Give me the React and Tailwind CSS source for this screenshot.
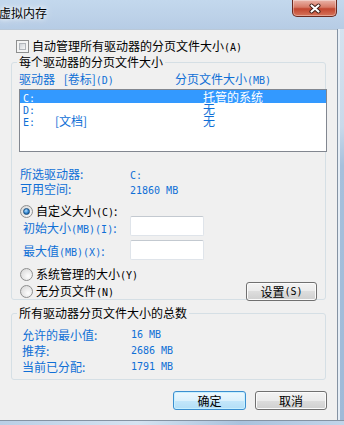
import React from "react";

const blue = "text-[#0f6fd6]";

// half-width latin parts look like a fixed 6px bitmap font in the reference
const Mono = ({ children }) => (
  <span className="font-['DejaVu_Sans_Mono',monospace] text-[10px]">{children}</span>
);

const CheckBox = () => (
  <span className="w-[13px] h-[13px] shrink-0 border border-[#8e8f8f] bg-[#f4f4f4] p-[2px] flex">
    <span className="flex-1 border border-[#b1b5ba] bg-[linear-gradient(135deg,#cfd3d8,#f7f7f7)]" />
  </span>
);

const Radio = ({ checked }) => (
  <span className="w-[13px] h-[13px] shrink-0 rounded-full border border-[#8e8f8f] bg-[radial-gradient(circle_at_65%_65%,#fdfdfd,#d2d2d2)] flex items-center justify-center">
    {checked && (
      <span className="w-[7px] h-[7px] rounded-full border border-[#1b4f7e] bg-[radial-gradient(circle_at_40%_35%,#b6e0ff,#2f84cf_55%,#0c3f73)]" />
    )}
  </span>
);

const Btn = ({ children, primary, className = "" }) => (
  <div
    className={
      "h-[19px] shrink-0 rounded-[3px] border flex items-center justify-center leading-[14px] text-black " +
      (primary
        ? "border-[#3c8fd0] bg-[linear-gradient(180deg,#eef8fe,#dcf1fc_50%,#c4e7fb_50%,#b3def6)] shadow-[inset_0_0_0_1px_#c8f0ff] "
        : "border-[#707070] bg-[linear-gradient(180deg,#f3f3f3,#ebebeb_50%,#dddddd_50%,#cfcfcf)] shadow-[inset_0_0_0_1px_#fbfbfb] ") +
      className
    }
  >
    {children}
  </div>
);

const drives = [
  { d: "C:", label: "", size: "托管的系统", sel: true, h: "h-[13px] leading-[13px]" },
  { d: "D:", label: "", size: "无", h: "h-[12px] leading-[12px]" },
  { d: "E:", label: "[文档]", size: "无", h: "h-[12px] leading-[12px]" },
];

const totals = [
  ["允许的最小值:", "16 MB"],
  ["推荐:", "2686 MB"],
  ["当前已分配:", "1791 MB"],
];

export default function App() {
  return (
    <div className="w-[344px] h-[425px] flex flex-col overflow-hidden font-['Noto_Sans_CJK_SC',sans-serif] text-[12px] text-black bg-[#b7cde5]">
      {/* title bar */}
      <div className="h-[29px] shrink-0 flex items-start bg-[linear-gradient(180deg,#c3d8ed,#bcd1e8_60%,#b6cce5)]">
        <span className="ml-[-1px] mt-[6px] leading-[14px] [text-shadow:0_0_4px_#fff,0_0_8px_#fff]">虚拟内存</span>
        <div className="ml-auto mr-[7px] w-[45px] h-[17px] rounded-b-[5px] border border-t-0 border-[#6b2a20] bg-[linear-gradient(180deg,#eab4a9,#d77a66_45%,#c2462f_55%,#d6745b)] shadow-[inset_0_0_0_1px_rgba(255,255,255,0.35)] flex items-center justify-center">
          <svg width="14" height="11" viewBox="0 0 14 11">
            <path d="M3.5 2.5L10.5 8.5M10.5 2.5L3.5 8.5" stroke="#3b1a14" strokeWidth="4" strokeLinecap="round" />
            <path d="M3.5 2.5L10.5 8.5M10.5 2.5L3.5 8.5" stroke="#fff" strokeWidth="2.2" strokeLinecap="round" />
          </svg>
        </div>
      </div>

      <div className="flex-1 flex min-h-0">
        {/* client area */}
        <div className="w-[337px] shrink-0 bg-[#f0f0f0] border-t border-[#b9c8d8] flex flex-col">
          <div className="mt-[10px] ml-[16px] h-[13px] flex items-center">
            <CheckBox />
            <span className="ml-[3px] leading-[13px]">
              自动管理所有驱动器的分页文件大小<Mono>(A)</Mono>
            </span>
          </div>

          {/* 每个驱动器 */}
          <div className="mt-[9px] ml-[11px] w-[315px] h-[238px] shrink-0 border border-[#d5dfe5] rounded-[3px] flex flex-col">
            <div className="-mt-[8px] ml-[5px] px-[2px] w-fit bg-[#f0f0f0] leading-[14px]">每个驱动器的分页文件大小</div>
            <div className={`mt-[3px] ml-[7px] flex items-baseline leading-[14px] ${blue}`}>
              <span className="w-[156px]">
                驱动器 <span className="ml-[6px]">[卷标]</span><Mono>(D)</Mono>
              </span>
              <span>
                分页文件大小<Mono>(MB)</Mono>
              </span>
            </div>
            <div className="mt-[1px] ml-[7px] w-[308px] h-[63px] shrink-0 border border-[#828790] bg-white flex flex-col">
              {drives.map((r) => (
                <div
                  key={r.d}
                  className={`${r.h} flex items-baseline pl-[3px] ${r.sel ? "bg-[#3399ff] text-white" : blue}`}
                >
                  <span className="w-[32px]">
                    <Mono>{r.d}</Mono>
                  </span>
                  <span className="w-[148px]">{r.label}</span>
                  <span>{r.size}</span>
                </div>
              ))}
            </div>

            <div className={`mt-[15px] ml-[8px] flex flex-col leading-[13px] ${blue}`}>
              <div className="flex items-baseline">
                <span className="w-[110px]">所选驱动器:</span>
                <Mono>C:</Mono>
              </div>
              <div className="flex items-baseline">
                <span className="w-[110px]">可用空间:</span>
                <Mono>21860 MB</Mono>
              </div>
            </div>

            <div className="mt-[8px] ml-[8px] h-[13px] flex items-center">
              <Radio checked />
              <span className="ml-[3px] leading-[13px]">
                自定义大小<Mono>(C)</Mono>:
              </span>
            </div>
            <div className={`-mt-[2px] ml-[11px] flex ${blue}`}>
              <span className="w-[107px] mt-[5px] leading-[13px]">
                初始大小<Mono>(MB)(I)</Mono>:
              </span>
              <input readOnly className="w-[74px] h-[20px] bg-white border border-[#dfe4ea] border-t-[#c3c9d0] rounded-[2px] outline-none" />
            </div>
            <div className={`mt-[4px] ml-[11px] flex ${blue}`}>
              <span className="w-[107px] mt-[4px] leading-[13px]">
                最大值<Mono>(MB)(X)</Mono>:
              </span>
              <input readOnly className="w-[74px] h-[20px] bg-white border border-[#dfe4ea] border-t-[#c3c9d0] rounded-[2px] outline-none" />
            </div>

            <div className="mt-[8px] ml-[8px] h-[13px] flex items-center">
              <Radio />
              <span className="ml-[3px] leading-[13px]">
                系统管理的大小<Mono>(Y)</Mono>
              </span>
            </div>
            <div className="mt-[1px] ml-[8px] mr-[8px] h-[19px] flex items-center">
              <Radio />
              <span className="ml-[3px] leading-[13px]">
                无分页文件<Mono>(N)</Mono>
              </span>
              <Btn className="ml-auto w-[71px]">
                设置<Mono>(S)</Mono>
              </Btn>
            </div>
          </div>

          {/* 总数 */}
          <div className="mt-[13px] ml-[11px] w-[315px] h-[67px] shrink-0 border border-[#d5dfe5] rounded-[3px] flex flex-col">
            <div className="-mt-[8px] ml-[5px] px-[2px] w-fit bg-[#f0f0f0] leading-[14px]">所有驱动器分页文件大小的总数</div>
            <div className={`mt-[6px] ml-[10px] flex flex-col ${blue}`}>
              {totals.map(([k, v]) => (
                <div key={k} className="h-[16px] flex items-center">
                  <span className="w-[109px] leading-[13px]">{k}</span>
                  <Mono>{v}</Mono>
                </div>
              ))}
            </div>
          </div>

          <div className="mt-[11px] ml-[173px] flex gap-[9px]">
            <Btn primary className="w-[73px]">确定</Btn>
            <Btn className="w-[72px]">取消</Btn>
          </div>
        </div>

        {/* right frame */}
        <div className="flex-1 border-l border-[#8593a3] bg-[linear-gradient(90deg,#e6eef6_0_2px,transparent_2px),linear-gradient(180deg,#d4e2ef,#c9d9ea_25%,#a6c0dc_35%,#9fbad8)]" />
      </div>

      <div className="h-[5px] shrink-0 border-t border-[#8593a3] bg-[linear-gradient(90deg,#b9cfe6,#d5e3f1_40%,#a9c2dd_70%,#c2d5ea)]" />
    </div>
  );
}
